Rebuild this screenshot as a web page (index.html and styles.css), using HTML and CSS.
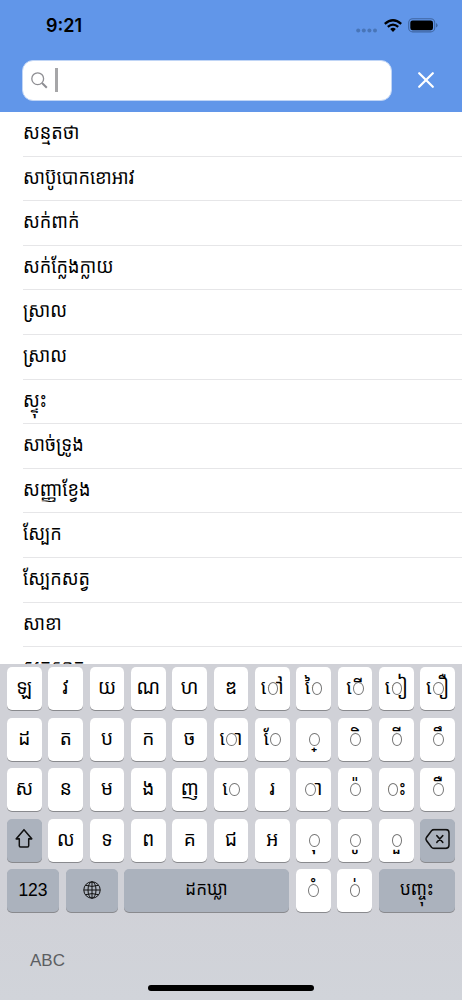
FILE: index.html
```html
<!DOCTYPE html>
<html lang="km">
<head>
  <meta charset="UTF-8" />
  <meta name="viewport" content="width=device-width, initial-scale=1.0" />
  <title>ស្វែងរក</title>
  <link rel="stylesheet" href="styles.css">
</head>
<body>
  <header class="header">
    <div class="status-bar">
      <span class="time">9:21</span>
      <div class="status-icons">
        <svg class="signal" width="22" height="5" viewBox="0 0 22 5" fill="#4875b8">
          <circle cx="2.2" cy="2.5" r="2" /><circle cx="7.8" cy="2.5" r="2" /><circle cx="13.4" cy="2.5" r="2" /><circle cx="19" cy="2.5" r="2" />
        </svg>
        <svg class="wifi" width="18" height="13" viewBox="0 0 18 13" fill="none" stroke="#000" stroke-width="2.3">
          <path d="M.8 4.8Q9-2.2 17.2 4.8" />
          <path d="M3.8 7.8Q9 3.4 14.2 7.8" />
          <path d="M6.2 9.9Q9 7.7 11.8 9.9L9 12.9z" fill="#000" stroke="none" />
        </svg>
        <svg class="battery" width="30" height="15" viewBox="0 0 30 15">
          <rect x=".7" y=".7" width="26" height="13.2" rx="4" fill="none" stroke="#3f66a3" stroke-width="1.1" />
          <rect x="2.3" y="2.4" width="22.7" height="9.8" rx="2.3" />
          <path d="M28 5q1.6.7 1.6 2.3T28 9.6z" fill="#3f66a3" />
        </svg>
      </div>
    </div>
    <div class="search-bar">
      <div class="search-box">
        <svg class="search-icon" width="17" height="17" viewBox="0 0 17 17" fill="none" stroke="#8e8e93">
          <circle cx="6.7" cy="6.7" r="5.9" stroke-width="1.3" />
          <path d="M11 11l4.8 4.8" stroke-width="2" />
        </svg>
        <span class="caret"></span>
      </div>
      <svg class="close" width="16" height="16" viewBox="0 0 16 16" fill="none" stroke="#fff" stroke-width="2.2" stroke-linecap="round">
        <path d="M1.2 1.2l13.6 13.6M14.8 1.2L1.2 14.8" />
      </svg>
    </div>
  </header>

  <ul class="list" id="list"></ul>

  <div class="keyboard">
    <div id="keys"></div>
    <div class="key-row bottom-row">
      <div class="key dark num">123</div>
      <div class="key dark">
        <svg class="globe" width="18" height="18" viewBox="0 0 18 18" fill="none" stroke="#111" stroke-width="1">
          <circle cx="9" cy="9" r="8.2" />
          <ellipse cx="9" cy="9" rx="4" ry="8.2" />
          <path d="M9 .8v16.4M.8 9h16.4M2.5 4.3q6.5 2.2 13 0M2.5 13.7q6.5-2.2 13 0" />
        </svg>
      </div>
      <div class="key dark word"><span class="glyph">ដកឃ្លា</span></div>
      <div class="key sign above"><span class="glyph">ំ</span></div>
      <div class="key sign above"><span class="glyph">់</span></div>
      <div class="key dark word"><span class="glyph">បញ្ចុះ</span></div>
    </div>
    <div class="abc">ABC</div>
    <div class="home-bar"></div>
  </div>

  <script>
    const words = [
      "សន្មតថា", "សាប៊ូបោកខោអាវ", "សក់ពាក់", "សក់ក្លែងក្លាយ", "ស្រាល", "ស្រាល",
      "ស្ទុះ", "សាច់ទ្រូង", "សញ្ញាខ្វែង", "ស្បែក", "ស្បែកសត្វ", "សាខា", "សកសាក"
    ];
    const shift = `<svg width="18" height="18" viewBox="0 0 18 18" fill="none" stroke="#111" stroke-width="1.5" stroke-linejoin="round">
      <path d="M9 1L1.2 9.3H4.3V15.5Q4.3 16.7 5.5 16.7H12.5Q13.7 16.7 13.7 15.5V9.3H16.8z" /></svg>`;
    const del = `<svg width="25" height="19" viewBox="0 0 25 19" fill="none" stroke="#111" stroke-width="1.5" stroke-linecap="round" stroke-linejoin="round">
      <path d="M9 1H21Q24 1 24 4V15Q24 18 21 18H9Q7.5 18 6.5 17L1.5 11Q.5 9.5 1.5 8L6.5 2Q7.5 1 9 1z" />
      <path d="M11.8 6.5l6 6M17.8 6.5l-6 6" /></svg>`;
    const rows = [
      ["ឡ", "វ", "យ", "ណ", "ហ", "ឌ", "ៅ", "ៃ", "ើ", "ៀ", "ឿ"],
      ["ដ", "ត", "ប", "ក", "ច", "ោ", "ែ", "្", "ិ", "ី", "ឹ"],
      ["ស", "ន", "ម", "ង", "ញ", "េ", "រ", "ា", "៉", "ះ", "ឺ"],
      [shift, "ល", "ទ", "ព", "គ", "ជ", "អ", "ុ", "ូ", "ួ", del]
    ];

    // dependent signs get a placeholder ring, shifted beside the side vowels
    function keyClass(k) {
      if (k === shift || k === del) return "key dark";
      if ("ៃើែេ".includes(k)) return "key sign ring-right";
      if ("ាះ".includes(k)) return "key sign ring-left";
      if (["ិ", "ី", "ឹ", "ឺ", "៉"].includes(k)) return "key sign above";
      if (["្", "ុ", "ូ", "ួ"].includes(k)) return "key sign below";
      if (k >= "\u17b6") return "key sign";
      return "key";
    }

    document.getElementById("list").innerHTML =
      words.map(w => `<li class="item"><span class="word-text">${w}</span></li>`).join("");

    document.getElementById("keys").innerHTML = rows.map(row =>
      `<div class="key-row">` +
      row.map(k => `<div class="${keyClass(k)}"><span class="glyph">${k}</span></div>`).join("") +
      `</div>`
    ).join("");
  </script>
</body>
</html>
```
FILE: styles.css
```css
* {
  box-sizing: border-box;
}
body {
  margin: 0;
  height: 1000px;
  display: flex;
  flex-direction: column;
  overflow: hidden;
  background: #fff;
  color: #000;
  font-family: "Inter", "Noto Sans", "Noto Sans Khmer", "Khmer OS", sans-serif;
}
svg {
  display: block;
}
.header {
  height: 112px;
  flex: none;
  background: #6196e9;
}
.status-bar {
  height: 60px;
  padding: 0 24px 9px 46px;
  display: flex;
  align-items: center;
  justify-content: space-between;
}
.time {
  font-size: 18px;
  font-weight: 600;
}
.status-icons {
  display: flex;
  align-items: center;
  gap: 6px;
}
.signal {
  margin-top: 9px;
}
.search-bar {
  height: 41px;
  padding: 0 28px 0 22px;
  display: flex;
  align-items: center;
  justify-content: space-between;
}
.search-box {
  width: 370px;
  height: 41px;
  padding-left: 8px;
  display: flex;
  align-items: center;
  gap: 7px;
  background: #fff;
  border: 1px solid #c0d5f6;
  border-radius: 11px;
}
.caret {
  width: 2.5px;
  height: 24px;
  margin-bottom: 2px;
  background: #a6a6a8;
}
.close {
  margin-bottom: 1px;
}
.list {
  flex: 1;
  min-height: 0;
  margin: 0;
  padding: 0;
  overflow: hidden;
  list-style: none;
}
.item {
  height: 44.6px;
  margin-left: 22.5px;
  border-bottom: 1px solid #e6e6e8;
  font-size: 18px;
  line-height: 41px;
  white-space: nowrap;
}
.word-text {
  display: inline-block;
  transform: translateY(-.6px) scale(1.005, 1.12);
  transform-origin: left center;
}
.keyboard {
  height: 336px;
  flex: none;
  padding: 3px 7px 0;
  background: linear-gradient(#d0d1d7 70%, #d1d4da);
}
.key-row {
  display: grid;
  grid-template-columns: repeat(11, 1fr);
  column-gap: 6.5px;
  height: 43px;
  margin-bottom: 7.5px;
}
.bottom-row {
  grid-template-columns: 52px 52px 165px 35px 35px 1fr;
  margin-bottom: 0;
}
.key {
  position: relative;
  display: flex;
  align-items: center;
  justify-content: center;
  min-width: 0;
  background: #fff;
  border-radius: 5px;
  box-shadow: 0 1px 0 #898a8e;
  font-size: 19px;
}
.glyph {
  line-height: 43px;
  transform: translateY(-1.5px) scaleY(1.1);
}
.dark .glyph {
  line-height: normal;
}
.sign::after {
  content: "";
  position: absolute;
  top: 15px;
  left: calc(50% - 4.6px);
  width: 8.6px;
  height: 11px;
  background: #fff;
  border: 1px solid #777;
  border-radius: 50%;
}
.above::after,
.below::after {
  background: none;
}
.above .glyph {
  clip-path: inset(-10px -20px 25px -20px);
  transform: translateY(-3.5px) scaleY(1.1);
}
.below .glyph {
  clip-path: inset(28px -20px -10px -20px);
  transform: translateY(.5px) scaleY(1.1);
}
.ring-right::after {
  margin-left: 2.7px;
}
.ring-left::after {
  margin-left: -4px;
}
.dark {
  background: #abb2bd;
}
.globe {
  margin-bottom: 2px;
}
.num {
  font-family: "Liberation Sans", Arial, sans-serif;
  font-size: 17.5px;
}
.word {
  font-size: 17px;
}
.word .glyph {
  transform: translateY(-3px) scaleY(1.12);
}
.abc {
  margin: 37px 0 0 23px;
  color: #5c5e62;
  font-family: "Liberation Sans", Arial, sans-serif;
  font-size: 17px;
  line-height: 24px;
}
.home-bar {
  width: 166px;
  height: 6px;
  margin: 12px auto 0;
  background: #000;
  border-radius: 3px;
}
```
